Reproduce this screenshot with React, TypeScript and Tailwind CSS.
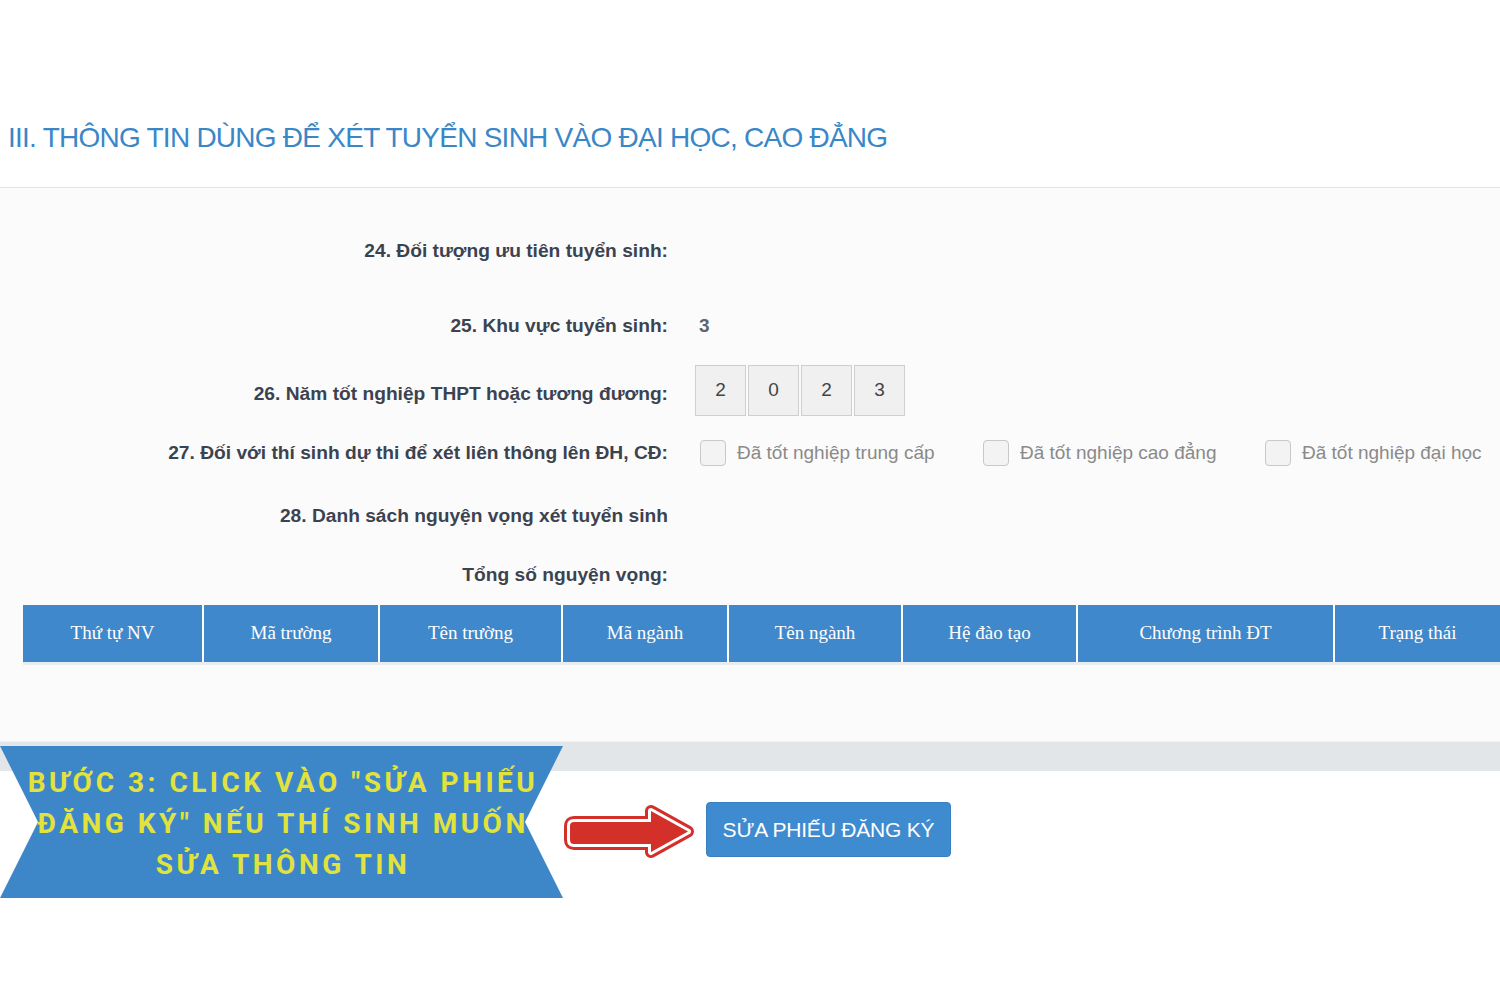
import React from "react";

const headers = [
  { label: "Thứ tự NV", w: "w-[179px]" },
  { label: "Mã trường", w: "w-[176px]" },
  { label: "Tên trường", w: "w-[183px]" },
  { label: "Mã ngành", w: "w-[166px]" },
  { label: "Tên ngành", w: "w-[174px]" },
  { label: "Hệ đào tạo", w: "w-[175px]" },
  { label: "Chương trình ĐT", w: "w-[257px]" },
  { label: "Trạng thái", w: "w-[167px]" },
];

const options = [
  { label: "Đã tốt nghiệp trung cấp", w: "w-[283px]" },
  { label: "Đã tốt nghiệp cao đẳng", w: "w-[282px]" },
  { label: "Đã tốt nghiệp đại học", w: "" },
];

const Label = ({ children, className = "" }: { children: React.ReactNode; className?: string }) => (
  <div className={`w-[668px] shrink-0 text-right text-[19.2px] font-bold text-[#3b4350] ${className}`}>
    {children}
  </div>
);

const Arrow = () => (
  <svg width="137" height="60" viewBox="0 0 137 60" className="shrink-0">
    <path
      d="M13 20 L90 20 L90 9 L127 29.5 L90 50 L90 42 L13 42 Q9 42 9 38 L9 24 Q9 20 13 20 Z"
      fill="#d3302a"
      stroke="#d3302a"
      strokeWidth="12"
      strokeLinejoin="round"
    />
    <path
      d="M13 20 L90 20 L90 9 L127 29.5 L90 50 L90 42 L13 42 Q9 42 9 38 L9 24 Q9 20 13 20 Z"
      fill="none"
      stroke="#ffffff"
      strokeWidth="6"
      strokeLinejoin="round"
    />
    <path
      d="M13 20 L90 20 L90 9 L127 29.5 L90 50 L90 42 L13 42 Q9 42 9 38 L9 24 Q9 20 13 20 Z"
      fill="#d3302a"
    />
  </svg>
);

export default function App() {
  return (
    <div className="w-[1500px] h-[1000px] bg-white overflow-hidden font-['Liberation_Sans',Arial,sans-serif]">
      <div className="h-[187px] pt-[120px] pl-[8px]">
        <h1 className="text-[28px] leading-[36px] text-[#3a87c8] tracking-[-0.75px]">
          III. THÔNG TIN DÙNG ĐỂ XÉT TUYỂN SINH VÀO ĐẠI HỌC, CAO ĐẲNG
        </h1>
      </div>

      <div className="border-t border-[#e4e4e4] bg-[#fbfbfb] h-[554px] overflow-hidden pt-[40px]">
        <div className="flex items-center h-[46px]">
          <Label>24. Đối tượng ưu tiên tuyển sinh:</Label>
        </div>

        <div className="flex items-center h-[46px] mt-[29px]">
          <Label>25. Khu vực tuyển sinh:</Label>
          <div className="ml-[31px] text-[19px] font-bold text-[#5b6470]">3</div>
        </div>

        <div className="flex items-center h-[52px] mt-[15px]">
          <Label className="pt-[9px]">26. Năm tốt nghiệp THPT hoặc tương đương:</Label>
          <div className="ml-[27px] flex gap-[2px]">
            {["2", "0", "2", "3"].map((d, i) => (
              <div
                key={i}
                className="w-[51px] h-[51px] flex items-center justify-center bg-[#f0f0f0] border border-[#cfcfcf] text-[19px] text-[#444]"
              >
                {d}
              </div>
            ))}
          </div>
        </div>

        <div className="flex items-center h-[46px] mt-[14px]">
          <Label>27. Đối với thí sinh dự thi để xét liên thông lên ĐH, CĐ:</Label>
          <div className="ml-[32px] flex items-center">
            {options.map((o) => (
              <div key={o.label} className={`flex items-center shrink-0 ${o.w}`}>
                <div className="w-[26px] h-[26px] rounded-[4px] border border-[#c8c8c8] bg-[#f3f3f3]" />
                <span className="ml-[11px] text-[19px] text-[#8a8a8a] whitespace-nowrap">{o.label}</span>
              </div>
            ))}
          </div>
        </div>

        <div className="flex items-center h-[46px] mt-[17px]">
          <Label>28. Danh sách nguyện vọng xét tuyển sinh</Label>
        </div>

        <div className="flex items-center h-[46px] mt-[13px]">
          <Label>Tổng số nguyện vọng:</Label>
        </div>

        <div className="ml-[23px] mt-[7px] flex w-max border-b-[3px] border-[#e9ecef]">
          {headers.map((h, i) => (
            <div
              key={h.label}
              className={`${h.w} shrink-0 h-[57px] flex items-center justify-center bg-[#3f88cb] text-white text-[19px] font-['Liberation_Serif','Times_New_Roman',serif] ${
                i > 0 ? "border-l-2 border-white" : ""
              }`}
            >
              {h.label}
            </div>
          ))}
        </div>
      </div>

      <div className="h-[30px] bg-[#e3e6e8] border-t border-[#eef0f1]" />

      <div className="relative z-10 -mt-[25px] flex items-start">
        <div className="w-[563px] h-[152px] shrink-0 flex items-center justify-center bg-[#3d87c9] [clip-path:polygon(0_0,100%_0,calc(100%-38px)_50%,100%_100%,0_100%,38px_50%)]">
          <p className="text-center text-[28px] leading-[41px] font-bold tracking-[3.5px] text-[#e1e33c] font-['Roboto',sans-serif] pt-[2px] -mr-[3px]">
            BƯỚC 3: CLICK VÀO "SỬA PHIẾU
            <br />
            ĐĂNG KÝ" NẾU THÍ SINH MUỐN
            <br />
            SỬA THÔNG TIN
          </p>
        </div>

        <div className="mt-[56px] -ml-[2px]">
          <Arrow />
        </div>

        <button className="ml-[8px] mt-[56px] w-[245px] h-[55px] rounded-[4px] bg-[#3f8bd0] border border-[#3a80c0] text-white text-[21px] tracking-[-0.2px]">
          SỬA PHIẾU ĐĂNG KÝ
        </button>
      </div>
    </div>
  );
}
